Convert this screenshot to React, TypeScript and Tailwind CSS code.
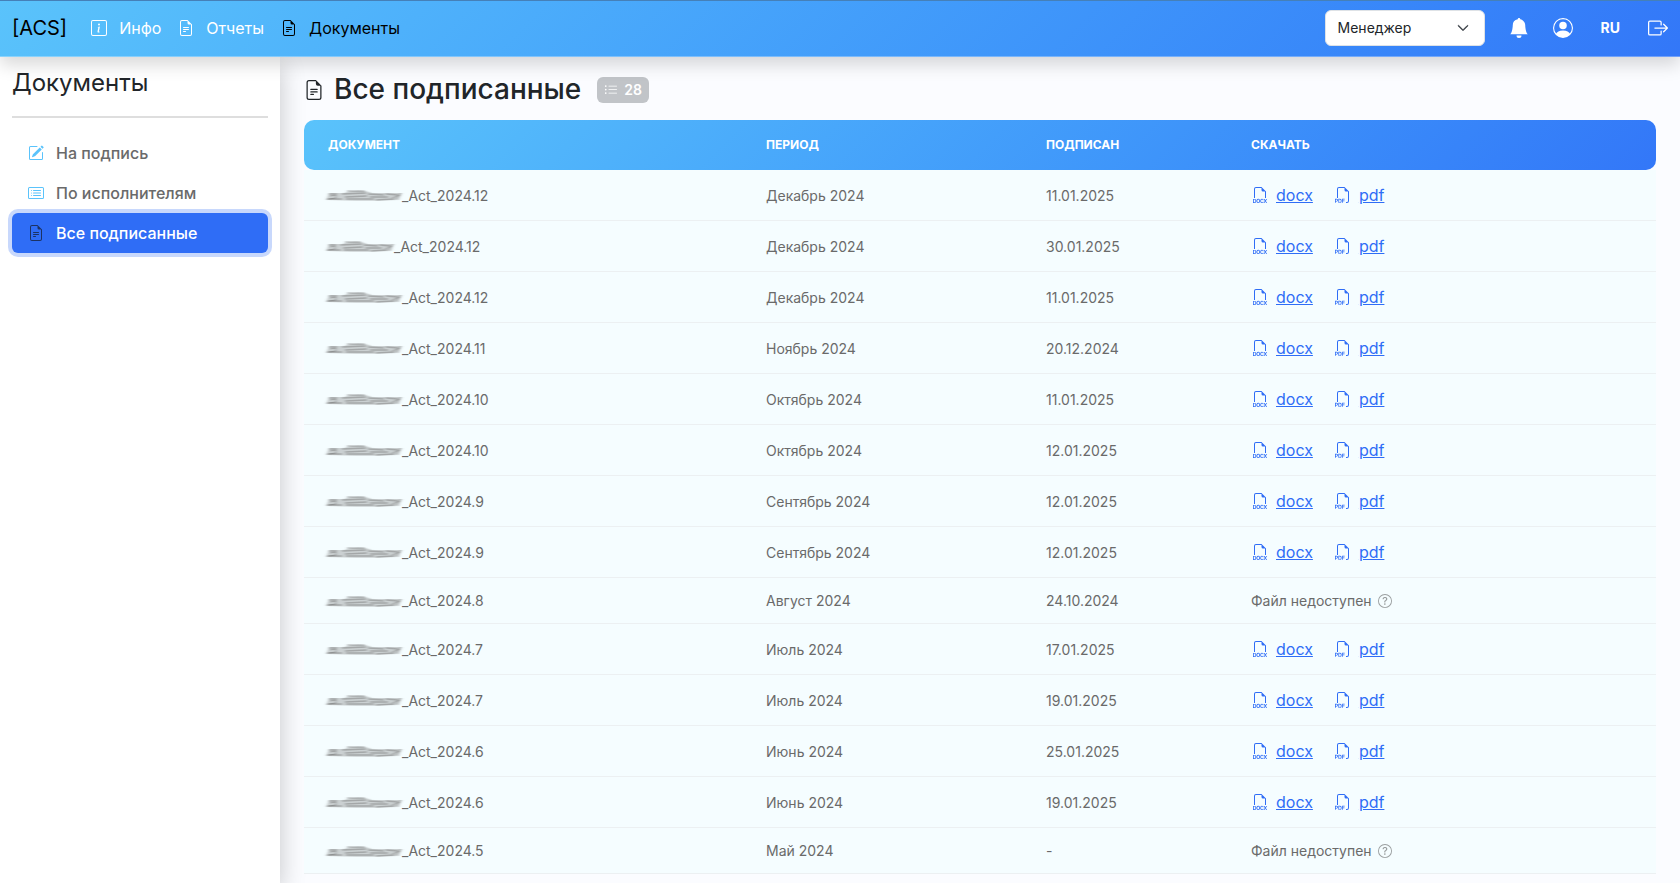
import React, { useState } from "react";
import {
  BsBellFill,
  BsBoxArrowRight,
  BsCardList,
  BsChevronDown,
  BsFileEarmarkText,
  BsFiletypeDocx,
  BsFiletypePdf,
  BsInfoSquare,
  BsListUl,
  BsPencilSquare,
  BsPersonCircle,
  BsQuestionCircle,
} from "react-icons/bs";

interface SignedDocument {
  id: number;
  name: string;
  period: string;
  signed: string;
  available: boolean;
  shortOwner?: boolean;
}

const documents: SignedDocument[] = [
  { id: 1, name: "_Act_2024.12", period: "Декабрь 2024", signed: "11.01.2025", available: true },
  { id: 2, name: "_Act_2024.12", period: "Декабрь 2024", signed: "30.01.2025", available: true, shortOwner: true },
  { id: 3, name: "_Act_2024.12", period: "Декабрь 2024", signed: "11.01.2025", available: true },
  { id: 4, name: "_Act_2024.11", period: "Ноябрь 2024", signed: "20.12.2024", available: true },
  { id: 5, name: "_Act_2024.10", period: "Октябрь 2024", signed: "11.01.2025", available: true },
  { id: 6, name: "_Act_2024.10", period: "Октябрь 2024", signed: "12.01.2025", available: true },
  { id: 7, name: "_Act_2024.9", period: "Сентябрь 2024", signed: "12.01.2025", available: true },
  { id: 8, name: "_Act_2024.9", period: "Сентябрь 2024", signed: "12.01.2025", available: true },
  { id: 9, name: "_Act_2024.8", period: "Август 2024", signed: "24.10.2024", available: false },
  { id: 10, name: "_Act_2024.7", period: "Июль 2024", signed: "17.01.2025", available: true },
  { id: 11, name: "_Act_2024.7", period: "Июль 2024", signed: "19.01.2025", available: true },
  { id: 12, name: "_Act_2024.6", period: "Июнь 2024", signed: "25.01.2025", available: true },
  { id: 13, name: "_Act_2024.6", period: "Июнь 2024", signed: "19.01.2025", available: true },
  { id: 14, name: "_Act_2024.5", period: "Май 2024", signed: "-", available: false },
];

// Smudge drawn in place of the owner's login
const HiddenOwner = ({ short }: { short?: boolean }) => (
  <svg
    viewBox="0 0 74 16"
    preserveAspectRatio="none"
    className={short ? "h-4 w-[66px] shrink-0 overflow-visible" : "h-4 w-[74px] shrink-0 overflow-visible"}
    fill="none"
    stroke="#6a6a6a"
    aria-hidden="true"
  >
    <defs>
      <filter id="smudge" x="-10%" y="-40%" width="120%" height="180%">
        <feGaussianBlur stdDeviation="1.6 0.6" />
      </filter>
    </defs>
    <g filter="url(#smudge)">
      <path
        d="M1 6 L16 6 C24 3 38 3 44 6 L74 6 L71 13 C50 14 24 14 -2 13 Z"
        fill="#6a6a6a"
        fillOpacity="0.3"
        stroke="none"
      />
      <path
        d="M1 7h8M-1 12h15M19 4h18M14 7l24-1M17 10l22-1M18 12h28M40 7l16 1M42 10h18M48 13l18-1M58 7l12 1M64 11l8-3"
        strokeOpacity="0.4"
        strokeWidth="1.3"
      />
      <path d="M2 9l6-1v3l-7 1M68 12l5-6" strokeOpacity="0.5" />
    </g>
  </svg>
);

const Header = () => {
  const [role, setRole] = useState("manager");

  return (
    <header className="relative z-10 flex h-[57px] items-center justify-between border-t border-b border-t-[#4580b8] border-b-white/30 bg-linear-135 from-[#5ac3fb] to-[#3377f8] bg-origin-border px-3 pb-px shadow-[0_8px_16px_rgba(0,0,0,0.15)]">
      <div className="flex items-center gap-6">
        <a href="#" className="text-xl text-black">
          [ACS]
        </a>
        <nav className="flex items-center gap-[17px] text-white">
          <a href="#info" className="flex items-center gap-3">
            <BsInfoSquare className="size-4" />
            Инфо
          </a>
          <a href="#reports" className="flex items-center gap-3">
            <BsFileEarmarkText className="size-4" />
            Отчеты
          </a>
          <a href="#documents" className="flex items-center gap-3 text-black">
            <BsFileEarmarkText className="size-4" />
            Документы
          </a>
        </nav>
      </div>

      <div className="flex items-center text-white">
        <div className="relative mr-6">
          <select
            aria-label="Роль"
            value={role}
            onChange={(e) => setRole(e.target.value)}
            className="h-9 w-40 appearance-none rounded-md border border-[#dee2e6] bg-white pl-3 text-sm text-[#212529]"
          >
            <option value="manager">Менеджер</option>
          </select>
          <BsChevronDown
            strokeWidth={1}
            className="pointer-events-none absolute top-3 right-4 size-3 text-[#343a40]"
          />
        </div>
        <button aria-label="Уведомления" className="mr-6">
          <BsBellFill className="size-5" />
        </button>
        <button aria-label="Профиль" className="mr-7">
          <BsPersonCircle className="size-5" />
        </button>
        <button className="mr-7 text-sm font-bold">RU</button>
        <button aria-label="Выйти">
          <BsBoxArrowRight className="size-5" />
        </button>
      </div>
    </header>
  );
};

const Sidebar = () => (
  <aside className="w-[280px] shrink-0 bg-white px-3 pt-2 shadow-[0_8px_24px_rgba(0,0,0,0.22)]">
    <h2 className="text-2xl leading-9">Документы</h2>
    <hr className="mt-[15px] mb-[15px] border-t-2 border-[#dedede]" />
    <nav className="flex flex-col font-medium text-[#6a6a6a]">
      <a href="#sign" className="flex h-10 items-center gap-3 px-4">
        <BsPencilSquare className="size-4 text-[#5ac3fb]" />
        На подпись
      </a>
      <a href="#performers" className="flex h-10 items-center gap-3 px-4">
        <BsCardList className="size-4 text-[#5ac3fb]" />
        По исполнителям
      </a>
      <a
        href="#signed"
        className="flex h-10 items-center gap-3 rounded-md bg-[#2f6df6] px-4 text-white ring-4 ring-[#c8d8fc]"
      >
        <BsFileEarmarkText className="size-4 text-[#1c3263]" />
        Все подписанные
      </a>
    </nav>
  </aside>
);

const DocumentsTable = () => (
  <table className="block w-full text-left text-sm leading-[19px] text-[#6a6a6a]">
    <thead className="block">
      <tr className="grid h-[50px] grid-cols-[438fr_280fr_205fr_429fr] items-center rounded-[10px] bg-linear-135 from-[#5ac3fb] to-[#3377f8] text-xs text-white uppercase">
        <th className="px-6 font-bold">Документ</th>
        <th className="px-6 font-bold">Период</th>
        <th className="px-6 font-bold">Подписан</th>
        <th className="px-6 font-bold">Скачать</th>
      </tr>
    </thead>
    <tbody className="block bg-[#f5fdff]">
      {documents.map((doc) => (
        <tr
          key={doc.id}
          className="grid grid-cols-[438fr_280fr_205fr_429fr] items-center border-b border-[#ecf0f2] py-[13px]"
        >
          <td className="flex items-center px-6">
            <HiddenOwner short={doc.shortOwner} />
            {doc.name}
          </td>
          <td className="px-6">{doc.period}</td>
          <td className="px-6">{doc.signed}</td>
          <td className="px-6">
            {doc.available ? (
              <div className="flex items-center gap-[22px] pl-px text-base leading-6 text-[#2f6df6]">
                <a href="#docx" className="flex items-center gap-2 underline">
                  <BsFiletypeDocx className="size-4" />
                  docx
                </a>
                <a href="#pdf" className="flex items-center gap-2 underline">
                  <BsFiletypePdf className="size-4" />
                  pdf
                </a>
              </div>
            ) : (
              <div className="flex items-center gap-[6px]">
                Файл недоступен
                <BsQuestionCircle className="size-[14px] text-[#9a9e9f]" />
              </div>
            )}
          </td>
        </tr>
      ))}
    </tbody>
  </table>
);

const App = () => (
  <div className="flex h-screen flex-col overflow-hidden bg-[#fbfcff] font-[Inter,sans-serif] text-base text-[#212529]">
    <Header />
    <div className="flex min-h-0 flex-1">
      <Sidebar />
      <main className="min-w-0 flex-1 px-6 pt-[13px]">
        <div className="mb-[11px] flex items-center">
          <BsFileEarmarkText className="mr-[10px] size-5" />
          <h1 className="text-[28px] leading-[39px] font-medium">Все подписанные</h1>
          <span className="ml-4 flex h-[26px] items-center gap-[6px] rounded-md bg-[#c1c4c8] px-[7px] text-sm font-semibold text-white">
            <BsListUl className="size-[14px]" />
            28
          </span>
        </div>
        <DocumentsTable />
      </main>
    </div>
  </div>
);

export default App;
